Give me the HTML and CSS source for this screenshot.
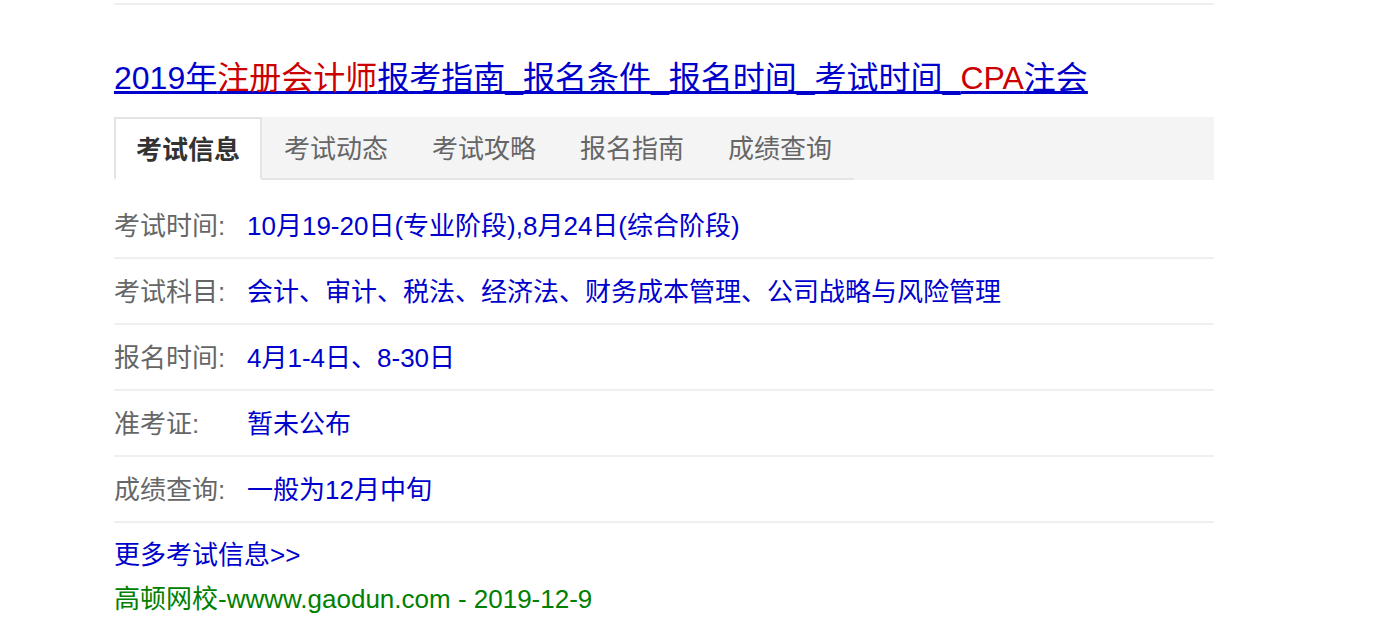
FILE: index.html
```html
<!DOCTYPE html>
<html lang="zh-CN">
<head>
<meta charset="utf-8">
<title>2019年注册会计师报考指南</title>
<link rel="stylesheet" href="styles.css">
</head>
<body>
<div class="page">
  <div class="topline"></div>
  <h3 class="title"><a href="#">2019年<em>注册会计师</em>报考指南_报名条件_报名时间_考试时间_<em>CPA</em>注会</a></h3>
  <div class="tabbar">
    <ul class="tabs">
      <li class="tab active">考试信息</li>
      <li class="tab">考试动态</li>
      <li class="tab">考试攻略</li>
      <li class="tab">报名指南</li>
      <li class="tab">成绩查询</li>
    </ul>
  </div>
  <ul class="rows">
    <li class="row"><span class="label">考试时间:</span><a class="value" href="#">10月19-20日(专业阶段),8月24日(综合阶段)</a></li>
    <li class="row"><span class="label">考试科目:</span><a class="value" href="#">会计、审计、税法、经济法、财务成本管理、公司战略与风险管理</a></li>
    <li class="row"><span class="label">报名时间:</span><a class="value" href="#">4月1-4日、8-30日</a></li>
    <li class="row"><span class="label">准考证:</span><a class="value" href="#">暂未公布</a></li>
    <li class="row"><span class="label">成绩查询:</span><a class="value" href="#">一般为12月中旬</a></li>
  </ul>
  <div class="more"><a href="#">更多考试信息&gt;&gt;</a></div>
  <div class="source">高顿网校-wwww.gaodun.com - 2019-12-9</div>
</div>
</body>
</html>
```

FILE: styles.css
```css
html, body {
  margin: 0;
  padding: 0;
  background: #fff;
}
body {
  font-family: "Liberation Sans", Arial, "Noto Sans CJK SC", sans-serif;
  font-size: 26px;
}
.page {
  width: 1100px;
  margin-left: 114px;
}
.topline {
  margin-top: 3px;
  height: 2px;
  background: #efefef;
}
.title {
  margin: 53px 0 0;
  font-size: 32px;
  font-weight: normal;
  line-height: 40px;
  height: 40px;
  white-space: nowrap;
}
.title a {
  color: #0000cc;
  text-decoration: underline;
}
.title em {
  font-style: normal;
  color: #cc0000;
}
.tabbar {
  margin-top: 19px;
  height: 63px;
  background: #f4f4f4;
}
.tabs {
  list-style: none;
  margin: 0;
  padding: 0;
  display: flex;
  height: 63px;
}
.tab {
  box-sizing: border-box;
  width: 148px;
  height: 63px;
  padding-top: 4px;
  line-height: 57px;
  text-align: center;
  color: #666;
  border-bottom: 2px solid #e4e4e4;
}
.tab.active {
  background: #fff;
  color: #333;
  font-weight: bold;
  border: 2px solid #e4e4e4;
  border-bottom-color: #fff;
  padding-top: 4px;
  line-height: 55px;
}
.rows {
  list-style: none;
  margin: 13px 0 0;
  padding: 0;
}
.row {
  display: flex;
  height: 62px;
  padding-top: 2px;
  line-height: 62px;
  border-bottom: 2px solid #f0f0f0;
  white-space: nowrap;
}
.label {
  width: 133px;
  flex: none;
  color: #666;
}
.value {
  color: #0000cc;
  text-decoration: none;
}
.more {
  margin-top: 10px;
  line-height: 44px;
}
.more a {
  color: #0000cc;
  text-decoration: none;
}
.source {
  line-height: 44px;
  color: #008000;
}
```
